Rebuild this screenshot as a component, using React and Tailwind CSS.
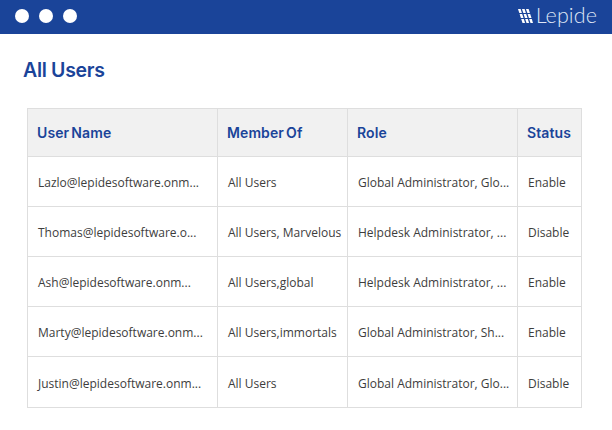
const USERS = [
  { name: 'Lazlo@lepidesoftware.onm...', member: 'All Users', role: 'Global Administrator, Glo...', status: 'Enable' },
  { name: 'Thomas@lepidesoftware.o...', member: 'All Users, Marvelous', role: 'Helpdesk Administrator, ...', status: 'Disable' },
  { name: 'Ash@lepidesoftware.onm...', member: 'All Users,global', role: 'Helpdesk Administrator, ...', status: 'Enable' },
  { name: 'Marty@lepidesoftware.onm...', member: 'All Users,immortals', role: 'Global Administrator, Sh...', status: 'Enable' },
  { name: 'Justin@lepidesoftware.onm...', member: 'All Users', role: 'Global Administrator, Glo...', status: 'Disable' },
]

function Logo() {
  return (
    <div className="flex items-center gap-[3px]">
      <svg width="15" height="14" viewBox="0 0 15 14" fill="white">
        <path d="M0 0h2.6l1.3 4H1.3z" />
        <path d="M4 0h2.6l1.3 4H5.3z" />
        <path d="M8 0h2.6l1.3 4H9.3z" />
        <path d="M1.6 5h2.6l1.3 4H2.9z" />
        <path d="M5.6 5h2.6l1.3 4H6.9z" />
        <path d="M9.6 5h2.6l1.3 4h-2.6z" />
        <path d="M3.2 10h2.6l1.3 4H4.5z" />
        <path d="M7.2 10h2.6l1.3 4H8.5z" />
        <path d="M11.2 10h2.6l1.2 4h-2.5z" />
      </svg>
      <span className="font-['Lato',sans-serif] font-light text-[21.5px] leading-none tracking-[0.1px] text-[#dfe6f5]">Lepide</span>
    </div>
  )
}

export default function App() {
  return (
    <div className="w-[612px] h-[430px] bg-white overflow-hidden font-['Open_Sans',sans-serif]">
      <div className="h-[34px] bg-[#1a4499] flex items-center justify-between px-[15px] pb-[2px]">
        <div className="flex items-center gap-[10px]">
          <span className="w-[14px] h-[14px] rounded-full bg-white" />
          <span className="w-[14px] h-[14px] rounded-full bg-white" />
          <span className="w-[14px] h-[14px] rounded-full bg-white" />
        </div>
        <Logo />
      </div>

      <h1 className="mt-[23px] ml-[23px] font-['Inter',sans-serif] font-semibold text-[19.5px] leading-[26px] tracking-[-0.3px] text-[#1a4499]">All Users</h1>

      <table className="mt-[25px] ml-[27px] w-[554px] table-fixed border-collapse">
        <colgroup>
          <col className="w-[190px]" />
          <col className="w-[130px]" />
          <col className="w-[170px]" />
          <col className="w-[64px]" />
        </colgroup>
        <thead>
          <tr className="h-[48px] bg-[#f1f1f1] font-['Inter',sans-serif] text-[14px] tracking-[0.1px] [word-spacing:-1.5px] text-[#1a4499]">
            <th className="border border-[#dedede] pl-[9px] text-left font-[560]">User Name</th>
            <th className="border border-[#dedede] pl-[9px] text-left font-[560]">Member Of</th>
            <th className="border border-[#dedede] pl-[9px] text-left font-[560]">Role</th>
            <th className="border border-[#dedede] pl-[9px] text-left font-[560]">Status</th>
          </tr>
        </thead>
        <tbody className="text-[12px] text-[#3d3d3d]">
          {USERS.map((user, i) => (
            <tr key={user.name} className={i === 4 ? 'h-[51px]' : 'h-[50px]'}>
              <td className="border border-[#dedede] pl-[10px] pt-[3px] whitespace-nowrap overflow-hidden">{user.name}</td>
              <td className="border border-[#dedede] pl-[10px] pt-[3px] whitespace-nowrap overflow-hidden">{user.member}</td>
              <td className="border border-[#dedede] pl-[10px] pt-[3px] whitespace-nowrap overflow-hidden">{user.role}</td>
              <td className="border border-[#dedede] pl-[10px] pt-[3px] whitespace-nowrap overflow-hidden">{user.status}</td>
            </tr>
          ))}
        </tbody>
      </table>
    </div>
  )
}
